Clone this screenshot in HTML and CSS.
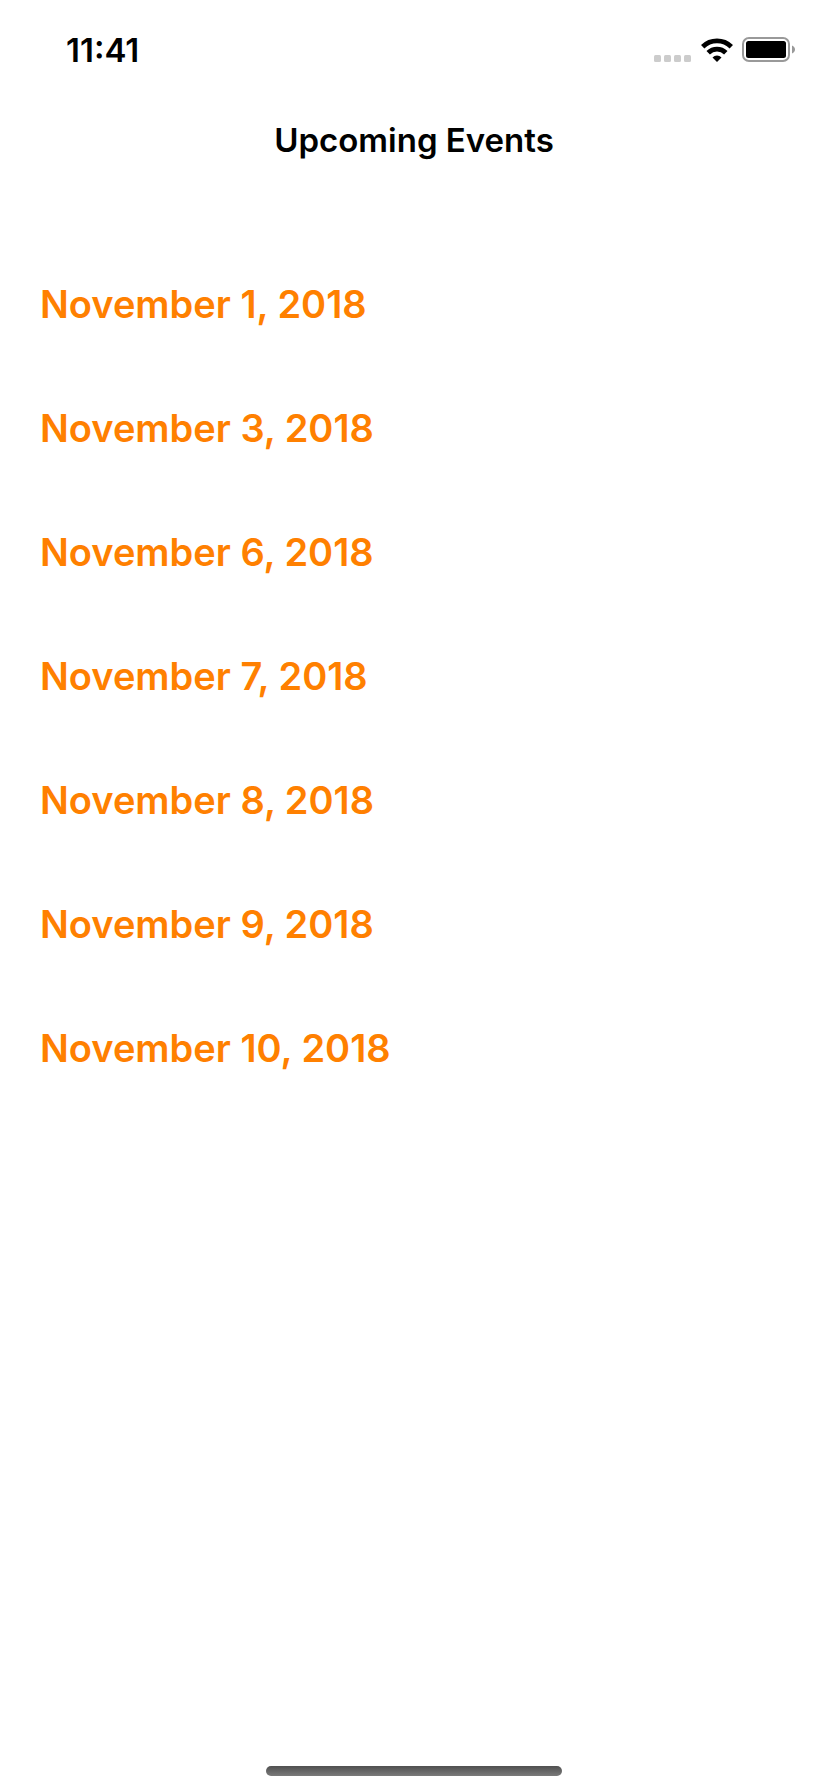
FILE: index.html
```html
<!DOCTYPE html>
<html lang="en">
<head>
<meta charset="utf-8">
<meta name="viewport" content="width=device-width, initial-scale=1">
<title>Upcoming Events</title>
<link rel="stylesheet" href="styles.css">
</head>
<body>
<div class="status-bar">
  <time class="clock">11:41</time>
  <div class="indicators">
    <svg class="signal" viewBox="0 0 38 8" width="38" height="8" fill="#ccc" aria-hidden="true"><rect width="7" height="7" rx="1.5"/><rect x="10" width="7" height="7" rx="1.5"/><rect x="20" width="7" height="7" rx="1.5"/><rect x="30" width="7" height="7" rx="1.5"/></svg>
    <svg class="wifi" viewBox="0 0 32 24" width="32" height="24" aria-hidden="true"><g fill="none" stroke="#000" stroke-width="4.8"><path d="M1.700 8.700a20.500 20.500 0 0 1 28.600 0"/><path d="M7.200 14.800a12.400 12.400 0 0 1 17.600 0"/></g><path d="M16 24l-4.500-4.600a6.400 6.400 0 0 1 9 0z"/></svg>
    <svg class="battery" viewBox="0 0 54 25" width="54" height="25" aria-hidden="true"><rect x="1" y="1" width="46" height="23" rx="6" fill="none" stroke="#999" stroke-width="2"/><rect x="4" y="4" width="40" height="17" rx="2.5"/><path d="M50 8.500c4 1.500 4 6.500 0 8z" fill="#999"/></svg>
  </div>
</div>
<header class="nav-bar"><h1 class="title">Upcoming Events</h1></header>
<main class="content">
  <ul class="events">
    <li class="event">November 1, 2018</li>
    <li class="event">November 3, 2018</li>
    <li class="event">November 6, 2018</li>
    <li class="event">November 7, 2018</li>
    <li class="event">November 8, 2018</li>
    <li class="event">November 9, 2018</li>
    <li class="event">November 10, 2018</li>
  </ul>
</main>
<footer class="home"><div class="home-indicator"></div></footer>
</body>
</html>
```
FILE: styles.css
```css
* { box-sizing: border-box; }
body {
  margin: 0;
  min-height: 100vh;
  display: flex;
  flex-direction: column;
  background: #fff;
  color: #000;
  font-family: Inter, "Liberation Sans", sans-serif;
}
.status-bar {
  height: 88px;
  padding: 11px 32px 0 66px;
  display: flex;
  align-items: center;
  justify-content: space-between;
}
.clock { font-size: 33px; line-height: 36px; font-weight: 600; }
.indicators { display: flex; align-items: center; gap: 9px; }
.signal { margin-top: 18px; }
.nav-bar {
  height: 104px;
  display: flex;
  align-items: center;
  justify-content: center;
}
.title { margin: 0; font-size: 33px; line-height: 40px; font-weight: 600; }
.content { flex: 1; padding: 50px 40px 0; }
.events { margin: 0; padding: 0; list-style: none; }
.event {
  height: 124px;
  display: flex;
  align-items: center;
  color: #ff8000;
  font-size: 38px;
  line-height: 48px;
  font-weight: 600;
}
.home { display: flex; justify-content: center; padding-bottom: 16px; }
.home-indicator {
  width: 296px;
  height: 10px;
  border-radius: 5px;
  background: linear-gradient(#505050, #7a7a7a);
}
```
